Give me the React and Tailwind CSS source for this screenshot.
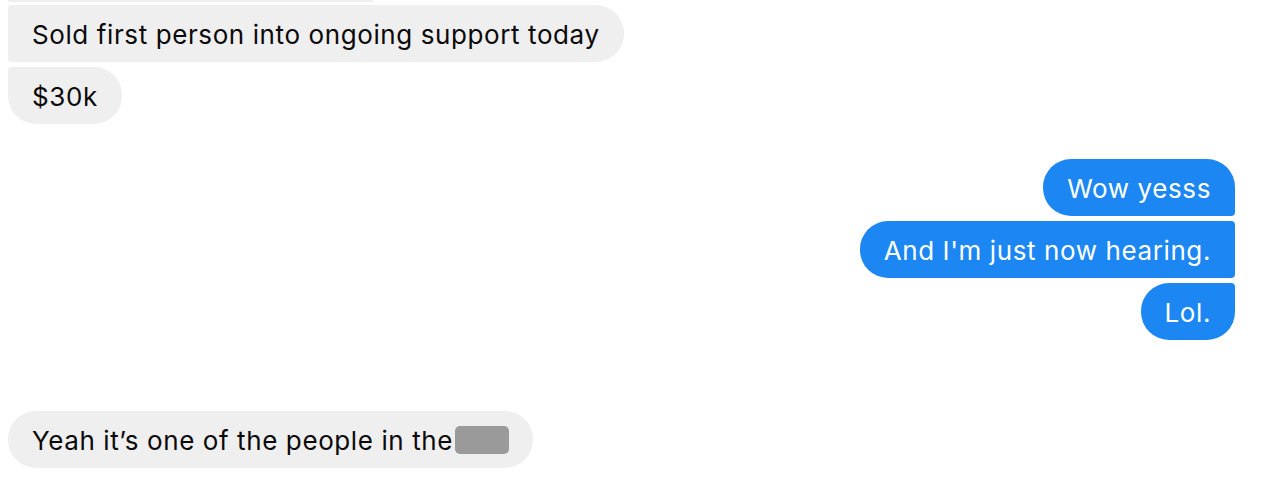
const GRAY = 'bg-[#f0eff0] text-[#0a0a0a]';
const BLUE = 'bg-[#1c87f2] text-white';

function Bubble({ children, className }) {
  return (
    <div className={`flex h-[57px] items-center px-6 pt-[3px] text-[26px] leading-none tracking-[0.6px] ${className}`}>
      {children}
    </div>
  );
}

export default function App() {
  return (
    <div
      className="flex h-[489px] w-[1279px] flex-col overflow-hidden bg-white pl-2 pr-[44px]"
      style={{ fontFamily: 'Inter, "Noto Sans", sans-serif' }}
    >
      <div className="h-[2px] w-[365px] rounded-bl-[4px] bg-[#f0eff0]" />

      <div className="mt-[3px] flex flex-col items-start gap-[5px]">
        <Bubble className={`${GRAY} rounded-l-[4px] rounded-r-[28px]`}>
          Sold first person into ongoing support today
        </Bubble>
        <Bubble className={`${GRAY} rounded-tl-[4px] rounded-bl-[28px] rounded-r-[28px]`}>$30k</Bubble>
      </div>

      <div className="mt-[35px] flex flex-col items-end gap-[5px]">
        <Bubble className={`${BLUE} rounded-l-[28px] rounded-tr-[28px] rounded-br-[4px]`}>Wow yesss</Bubble>
        <Bubble className={`${BLUE} rounded-l-[28px] rounded-r-[4px]`}>And I'm just now hearing.</Bubble>
        <Bubble className={`${BLUE} rounded-l-[28px] rounded-tr-[4px] rounded-br-[28px]`}>Lol.</Bubble>
      </div>

      <div className="mt-[71px] flex flex-col items-start">
        <Bubble className={`${GRAY} rounded-[28px]`}>
          Yeah it’s one of the people in the
          <span className="-mt-[3px] ml-[2px] inline-block h-[28px] w-[54px] rounded-[5px] bg-[#9a9a9a]" />
        </Bubble>
      </div>
    </div>
  );
}
